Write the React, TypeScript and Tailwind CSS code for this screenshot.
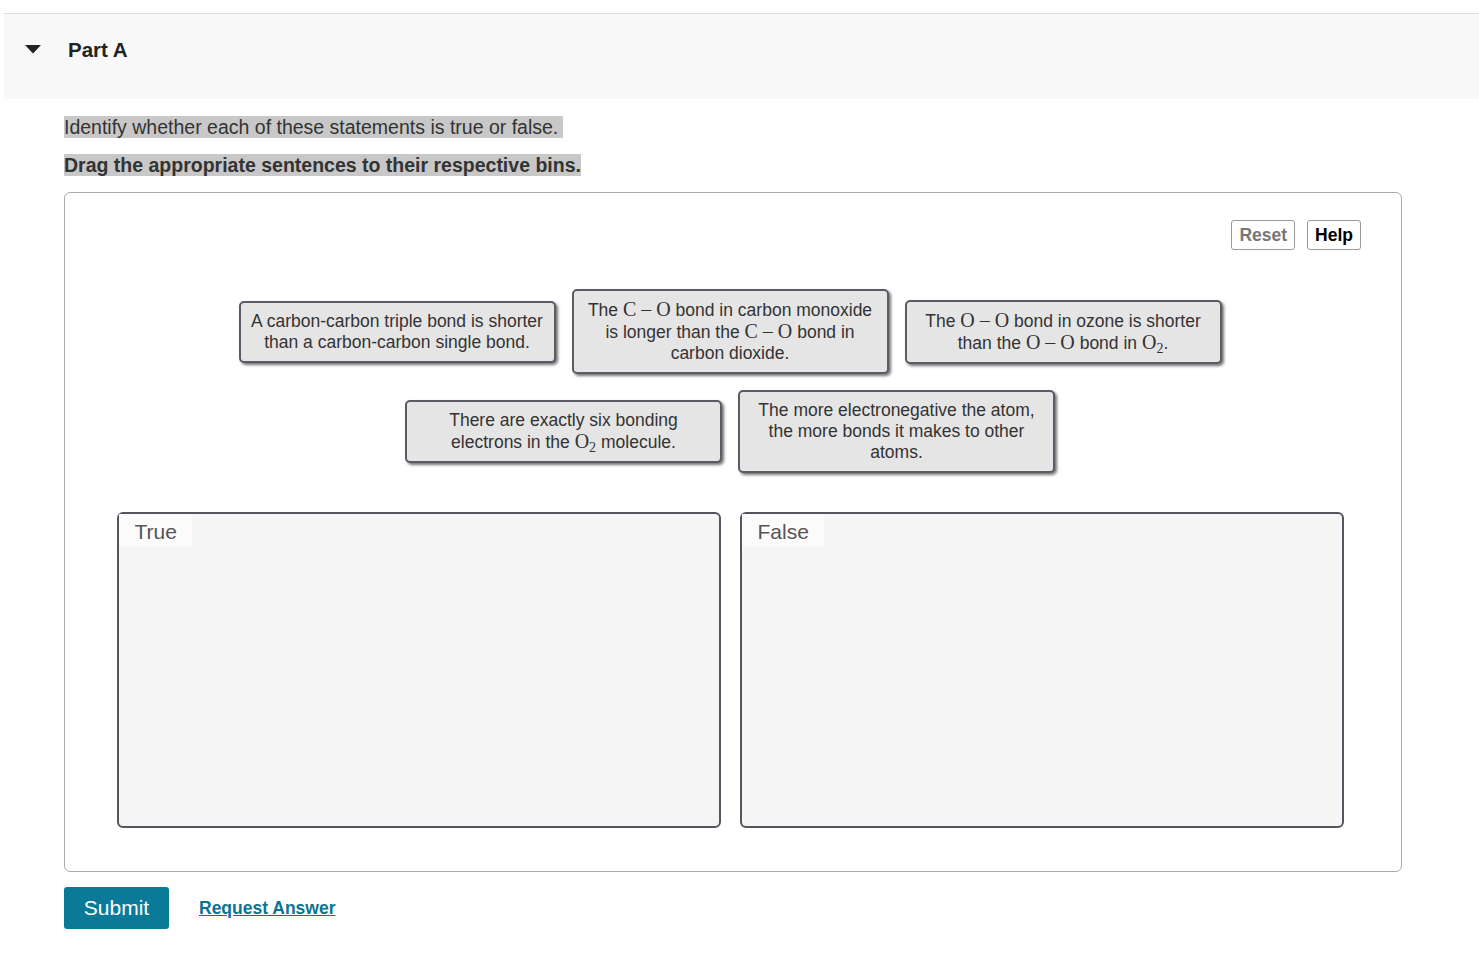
import React from 'react';

const serif = { fontFamily: '"Liberation Serif", "Times New Roman", serif' };

function M({ children }: { children: React.ReactNode }) {
  return (
    <span className="text-[20px] leading-none" style={serif}>
      {children}
    </span>
  );
}

function Bond({ a, b }: { a: string; b: string }) {
  return (
    <M>
      {a}
      <span className="mx-[5px]">–</span>
      {b}
    </M>
  );
}

function O2() {
  return (
    <M>
      O<span className="relative top-[4px] text-[14px] leading-none">2</span>
    </M>
  );
}

function Card({ children }: { children: React.ReactNode }) {
  return (
    <div className="w-[317px] rounded-[5px] border-2 border-[#5b5b66] bg-[#e5e5e5] px-[9px] py-[8px] text-center text-[17.5px] leading-[21px] text-[#333] shadow-[2px_2px_3px_rgba(0,0,0,0.55)]">
      {children}
    </div>
  );
}

function Bin({ label }: { label: string }) {
  return (
    <div className="h-[316px] w-[604px] rounded-[6px] border-2 border-[#55555f] bg-[#f5f5f5]">
      <div className="inline-block h-[32px] bg-[#fbfbfb] pl-[16px] pr-[15px] text-[21px] leading-[36px] text-[#555]">
        {label}
      </div>
    </div>
  );
}

export default function App() {
  return (
    <div
      className="min-h-screen bg-white pl-[4px] pt-[13px]"
      style={{ fontFamily: '"Liberation Sans", Arial, sans-serif' }}
    >
      <div className="flex h-[86px] items-start border-t border-[#dddddd] bg-[#f8f8f8] pt-[24px]">
        <svg width="16" height="9" viewBox="0 0 16 9" className="ml-[21px] mt-[7px]">
          <path d="M0 0 H16 L8 8.5 Z" fill="#222" />
        </svg>
        <span className="ml-[27px] text-[20.5px] font-bold leading-[24px] text-[#222]">Part A</span>
      </div>

      <div className="pl-[60px] pr-[77px]">
        <p className="mt-[17px] text-[19.5px] leading-[22px] text-[#333]">
          <span className="bg-[#c8c8c8] pr-[5px]">Identify whether each of these statements is true or false.</span>
        </p>
        <p className="mt-[16px] text-[19.5px] font-bold leading-[22px] text-[#333]">
          <span className="bg-[#c8c8c8]">Drag the appropriate sentences to their respective bins.</span>
        </p>

        <div className="mt-[16px] rounded-[6px] border border-[#aaaaaa] pb-[43px] pt-[27px]">
          <div className="flex justify-end gap-[12px] pr-[40px]">
            <button className="h-[30px] rounded-[3px] border border-[#999] px-[7px] text-[17.5px] font-bold text-[#777]">
              Reset
            </button>
            <button className="h-[30px] rounded-[3px] border border-[#999] px-[7px] text-[17.5px] font-bold text-black">
              Help
            </button>
          </div>

          <div className="mt-[39px] flex items-center justify-center gap-[16px] pr-[6px]">
            <Card>
              A carbon-carbon triple bond is shorter than a carbon-carbon single bond.
            </Card>
            <Card>
              The <Bond a="C" b="O" /> bond in carbon monoxide is longer than the <Bond a="C" b="O" /> bond in
              carbon dioxide.
            </Card>
            <Card>
              The <Bond a="O" b="O" /> bond in ozone is shorter than the <Bond a="O" b="O" /> bond in <O2 />.
            </Card>
          </div>

          <div className="mt-[16px] flex items-center justify-center gap-[16px] pr-[6px]">
            <Card>
              There are exactly six bonding electrons in the <O2 /> molecule.
            </Card>
            <Card>The more electronegative the atom, the more bonds it makes to other atoms.</Card>
          </div>

          <div className="mt-[39px] flex justify-center gap-[19px] pr-[6px]">
            <Bin label="True" />
            <Bin label="False" />
          </div>
        </div>

        <div className="mt-[15px] flex items-center">
          <button className="h-[42px] w-[105px] rounded-[3px] bg-[#0b7a99] text-[21px] text-white">Submit</button>
          <a href="#" className="ml-[30px] text-[17.5px] font-bold text-[#0b7394] underline">
            Request Answer
          </a>
        </div>
      </div>
    </div>
  );
}
